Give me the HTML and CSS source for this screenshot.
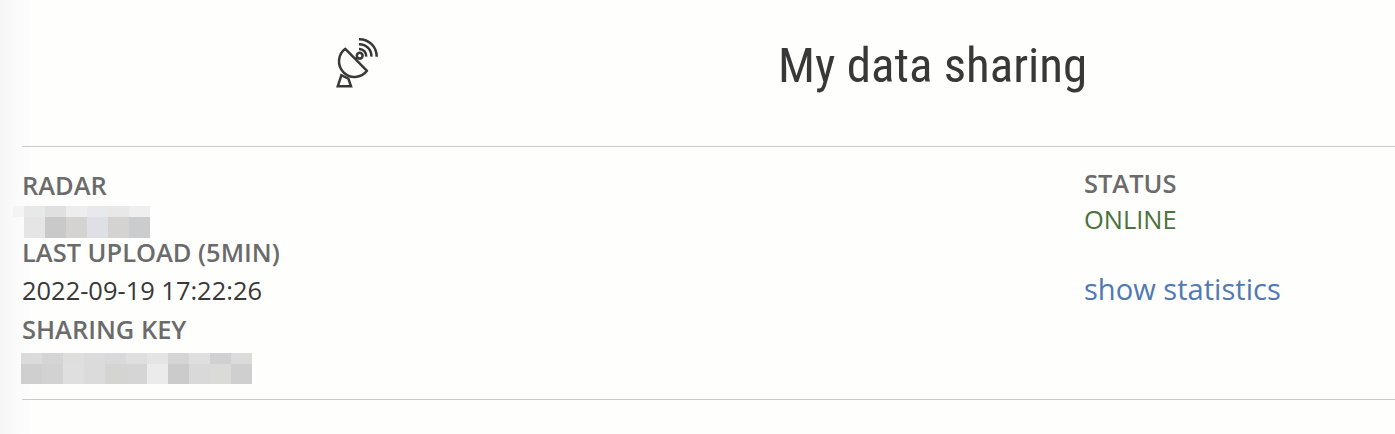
FILE: index.html
```
<!DOCTYPE html>
<html lang="en">
<head>
  <meta charset="UTF-8" />
  <meta name="viewport" content="width=device-width, initial-scale=1.0"/>
  <title>My data sharing</title>
  <link rel="stylesheet" href="styles.css">
</head>
<body>

  <header class="page-header">
    <svg class="dish" viewBox="0 0 64 64" fill="none" stroke="currentColor" stroke-width="2.5">
      <path d="M20.3 18.8 L42 40.8 A15.6 15.6 0 1 1 20.3 18.8 Z" stroke-linejoin="round"/>
      <path d="M30.5 29.3 L32.6 27.2"/>
      <circle cx="34.7" cy="25.7" r="2.9"/>
      <path d="M34 18.9 A7 7 0 0 1 41.2 26.6"/>
      <path d="M34 14.2 A12 12 0 0 1 46.4 26.6"/>
      <path d="M34 9.2 A17.3 17.3 0 0 1 51.7 26.8"/>
      <path d="M16.4 45.2 L12.8 56.3 H26 L23.4 48.6 Z"/>
    </svg>
    <h1>My data sharing</h1>
  </header>

  <section class="sharing">
    <div class="details">
      <div class="label">RADAR</div>
      <div class="masked masked-radar">
        <div class="row"><i class="g1 half"></i><i class="g2"></i><i class="g3"></i><i class="g4"></i><i class="g5"></i><i class="g6"></i><i class="g7"></i></div>
        <div class="row"><i class="half"></i><i class="g8"></i><i class="g9"></i><i class="g10"></i><i class="g11"></i><i class="g10"></i><i class="g12"></i></div>
      </div>
      <div class="label">LAST UPLOAD (5MIN)</div>
      <div class="value">2022-09-19 17:22:26</div>
      <div class="label">SHARING KEY</div>
      <div class="masked masked-key">
        <div class="row"><i class="k1"></i><i class="k2"></i><i class="k3"></i><i class="k1"></i><i class="k4"></i><i class="k5"></i><i class="k6"></i><i class="k2"></i><i class="k5"></i><i class="k7"></i><i class="k1"></i></div>
        <div class="row"><i class="k8"></i><i class="k9"></i><i class="k5"></i><i class="k1"></i><i class="k10"></i><i class="k2"></i><i class="k11"></i><i class="k12"></i><i class="k4"></i><i class="k13"></i><i class="k8"></i></div>
      </div>
    </div>

    <div class="status">
      <div class="label">STATUS</div>
      <div class="online">ONLINE</div>
      <a class="stats" href="#">show statistics</a>
    </div>
  </section>

</body>
</html>
```
FILE: styles.css
```
:root {
  --bg: #fefefd;
  --text: #383838;
  --label: #6b6b6b;
  --line: #cbcbcb;
  --online: #4c713c;
  --link: #5079b3;
}

* {
  box-sizing: border-box;
}

body {
  margin: 0;
  height: 434px;
  padding-left: 22px;
  overflow: hidden;
  font-family: "Open Sans", sans-serif;
  font-size: 25.45px;
  color: var(--text);
  background: linear-gradient(to right, #f6f6f6, #fcfcfd 22px, #fcfcfd 30px, var(--bg) 30px);
}

.page-header {
  display: flex;
  height: 146px;
  padding: 30px 0 0 303px;
}

.dish {
  width: 64px;
  height: 64px;
}

h1 {
  margin: 0 0 0 389px;
  font-family: "Roboto Condensed", Roboto, sans-serif;
  font-size: 49px;
  font-stretch: 75%;
  font-weight: 400;
  line-height: 72px;
  white-space: nowrap;
}

.sharing {
  display: flex;
  height: 254px;
  border-top: 1px solid var(--line);
  border-bottom: 1px solid var(--line);
}

.details {
  width: 1062px;
  padding-top: 23px;
}

.label {
  line-height: 30px;
  font-weight: 600;
  color: var(--label);
}

.value {
  line-height: 46px;
  margin-bottom: 1px;
}

.status {
  padding-top: 21px;
  white-space: nowrap;
}

.online {
  line-height: 42px;
  color: var(--online);
}

.stats {
  display: block;
  margin-top: 28px;
  font-size: 29.1px;
  line-height: 42px;
  color: var(--link);
  text-decoration: none;
}

/* pixelated private values */
.masked-radar {
  margin: 6px 0 -1px -9px;
}

.masked-key {
  margin: 9px 0 0 -1px;
}

.row {
  display: flex;
}

.row i {
  width: 21px;
  height: 11px;
}

.row + .row i {
  height: 21px;
}

.masked-key .row + .row i {
  height: 20px;
}

.row .half {
  width: 11px;
}

.g1 { background: #f4f4f4; }
.g2 { background: #e7e9e8; }
.g3 { background: #e0e0e0; }
.g4 { background: #ededee; }
.g5 { background: #e8e9ec; }
.g6 { background: #e8e8e8; }
.g7 { background: #efefef; }
.g8 { background: #e5e5e5; }
.g9 { background: #c9c9c9; }
.g10 { background: #d4d3d1; }
.g11 { background: #dfe0e5; }
.g12 { background: #cbccce; }

.k1 { background: #dbdbdb; }
.k2 { background: #d5d5d5; }
.k3 { background: #dededa; }
.k4 { background: #d9d9d9; }
.k5 { background: #dfdfdf; }
.k6 { background: #e4e4e4; }
.k7 { background: #d0d0d0; }
.k8 { background: #cfcfcf; }
.k9 { background: #d2d2d2; }
.k10 { background: #d4d4d1; }
.k11 { background: #ebebeb; }
.k12 { background: #cbcbcb; }
.k13 { background: #dadad7; }
```
